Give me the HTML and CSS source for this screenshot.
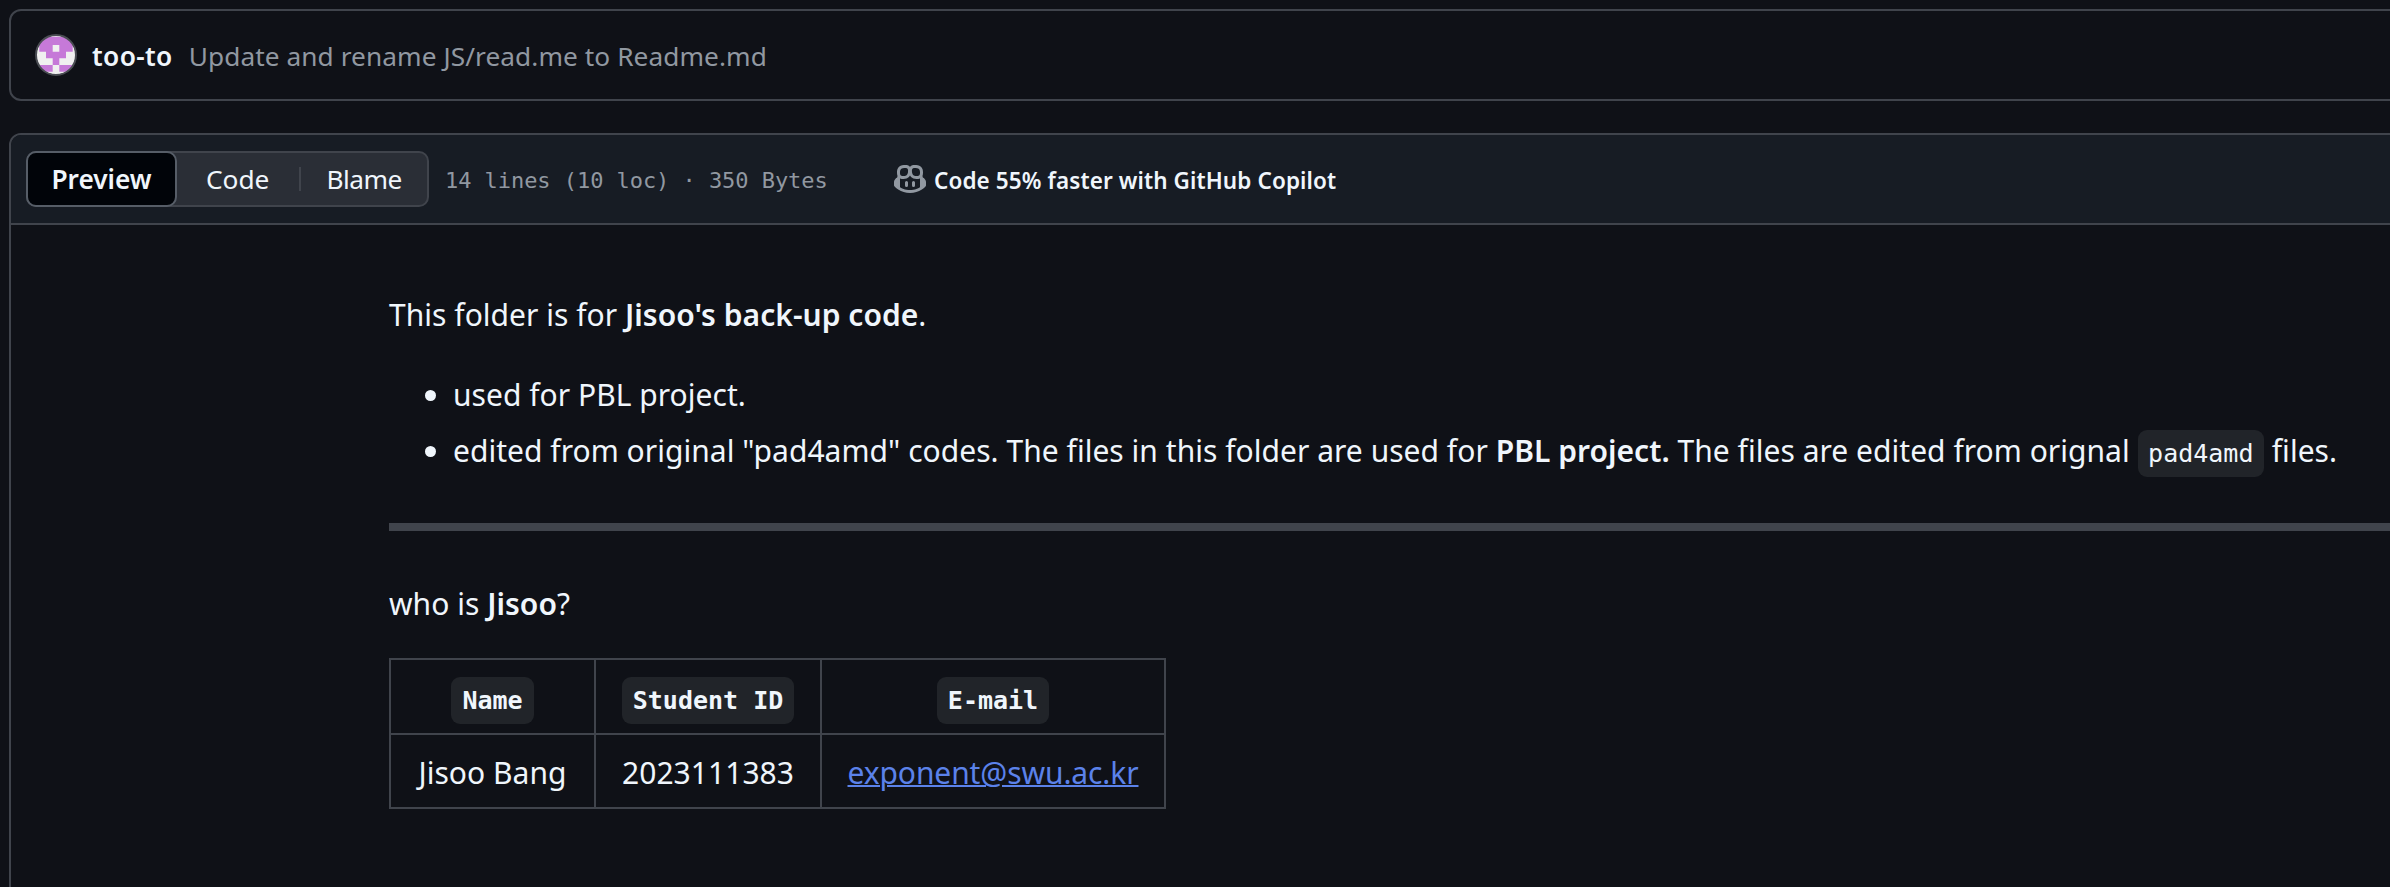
FILE: index.html
```html
<!DOCTYPE html>
<html lang="en">
<head>
<meta charset="utf-8">
<title>Readme.md</title>
<link rel="stylesheet" href="styles.css">
</head>
<body>
<div class="page">
  <section class="commit-box">
    <svg class="avatar" viewBox="0 0 42 42" width="42" height="42" aria-hidden="true">
      <defs><clipPath id="av"><circle cx="21" cy="21" r="19.5"/></clipPath></defs>
      <g clip-path="url(#av)">
        <rect width="42" height="42" fill="#f0f0f0"/>
        <path fill="#c679d8" d="M4.3 2.7H37.7V17.7H31V24.3H24.3V31H17.7V24.3H11V17.7H4.3Z"/>
        <path fill="#f0f0f0" d="M17.7 11H24.3V17.7H17.7Z"/>
        <path fill="#c679d8" d="M4.3 31H17.7V37.7H4.3ZM24.3 31H37.7V37.7H24.3Z"/>
      </g>
      <circle cx="21" cy="21" r="20" fill="none" stroke="#4a4d53" stroke-width="2"/>
    </svg>
    <span class="author">too-to</span>
    <span class="message">Update and rename JS/read.me to Readme.md</span>
  </section>

  <section class="file-box">
    <header class="file-head">
      <div class="segment">
        <span class="tab tab-active">Preview</span>
        <span class="tab tab-code">Code</span>
        <span class="tab-sep"></span>
        <span class="tab tab-blame">Blame</span>
      </div>
      <span class="file-info">14 lines (10 loc) · 350 Bytes</span>
      <span class="copilot">
        <svg class="copilot-icon" viewBox="0 0 16 16" width="32" height="32" aria-hidden="true"><path d="M7.998 15.035c-4.562 0-7.873-2.914-7.998-3.749V9.338c.085-.628.677-1.686 1.588-2.065.013-.07.024-.143.036-.218.029-.183.06-.384.126-.612-.201-.508-.254-1.084-.254-1.656 0-.87.128-1.769.693-2.484.579-.733 1.494-1.124 2.724-1.261 1.206-.134 2.262.034 2.944.765.05.053.096.108.139.165.044-.057.094-.112.143-.165.682-.731 1.738-.899 2.944-.765 1.23.137 2.145.528 2.724 1.261.566.715.693 1.614.693 2.484 0 .572-.053 1.148-.254 1.656.066.228.098.429.126.612.012.076.024.148.037.218.924.385 1.522 1.471 1.591 2.095v1.872c0 .766-3.351 3.795-8.002 3.795Zm0-1.485c2.28 0 4.584-1.11 5.002-1.433V7.862l-.023-.116c-.49.21-1.075.291-1.727.291-1.146 0-2.059-.327-2.71-.991A3.222 3.222 0 0 1 8 6.303a3.24 3.24 0 0 1-.544.743c-.65.664-1.563.991-2.71.991-.652 0-1.236-.081-1.727-.291l-.023.116v4.255c.419.323 2.722 1.433 5.002 1.433ZM6.762 2.83c-.193-.206-.637-.413-1.682-.297-1.019.113-1.479.404-1.713.7-.247.312-.369.789-.369 1.554 0 .793.129 1.171.308 1.371.162.181.519.379 1.442.379.853 0 1.339-.235 1.638-.54.315-.322.527-.827.617-1.553.117-.935-.037-1.395-.241-1.614Zm4.155-.297c-1.044-.116-1.488.091-1.681.297-.204.219-.359.679-.242 1.614.091.726.303 1.231.618 1.553.299.305.784.54 1.638.54.922 0 1.28-.198 1.442-.379.179-.2.308-.578.308-1.371 0-.765-.123-1.242-.37-1.554-.233-.296-.693-.587-1.713-.7Z"/><path d="M6.25 9.037a.75.75 0 0 1 .75.75v1.501a.75.75 0 0 1-1.5 0V9.787a.75.75 0 0 1 .75-.75Zm4.25.75v1.501a.75.75 0 0 1-1.5 0V9.787a.75.75 0 0 1 1.5 0Z"/></svg>
        <span class="copilot-text">Code 55% faster with GitHub Copilot</span>
      </span>
    </header>
    <article class="markdown">
      <p class="intro">This folder is for <strong>Jisoo's back-up code</strong>.</p>
      <ul class="notes">
        <li>used for PBL project.</li>
        <li>edited from original "pad4amd" codes. The files in this folder are used for <strong>PBL project.</strong> The files are edited from orignal <code class="inline-code">pad4amd</code> files.</li>
      </ul>
      <hr class="rule">
      <p class="who">who is <strong>Jisoo</strong>?</p>
      <table class="people">
        <thead>
          <tr>
            <th class="col-name"><code class="head-code">Name</code></th>
            <th class="col-id"><code class="head-code">Student ID</code></th>
            <th class="col-mail"><code class="head-code">E-mail</code></th>
          </tr>
        </thead>
        <tbody>
          <tr>
            <td>Jisoo Bang</td>
            <td>2023111383</td>
            <td><a class="mail" href="#">exponent@swu.ac.kr</a></td>
          </tr>
        </tbody>
      </table>
    </article>
  </section>
</div>
</body>
</html>
```
FILE: styles.css
```css
html, body {
  margin: 0;
  height: 100%;
  overflow: hidden;
  background: #0f1117;
}
body {
  font-family: "Noto Sans", "Open Sans", sans-serif;
  color: #f0f6fc;
}
.page {
  width: 2600px;
  padding: 9px 0 0 9px;
  box-sizing: border-box;
}
.commit-box {
  height: 92px;
  box-sizing: border-box;
  border: 2px solid #40444c;
  border-radius: 12px;
  display: flex;
  align-items: center;
  padding-left: 24px;
}
.avatar { flex: none; }
.author {
  margin-left: 15px;
  padding-top: 2px;
  font-size: 26.25px;
  font-weight: 600;
  letter-spacing: 0.4px;
}
.message {
  margin-left: 16px;
  padding-top: 2px;
  font-size: 26.25px;
  letter-spacing: 0.07px;
  color: #9198a1;
}
.file-box {
  margin-top: 32px;
  height: 800px;
  border: 2px solid #40444c;
  border-radius: 12px;
  box-sizing: border-box;
  overflow: hidden;
}
.file-head {
  height: 90px;
  background: #171c24;
  border-bottom: 2px solid #40444c;
  box-sizing: border-box;
  display: flex;
  align-items: center;
  padding-left: 15px;
}
.segment {
  display: flex;
  align-items: center;
  width: 403px;
  height: 56px;
  box-sizing: border-box;
  background: #2a2e36;
  border: 2px solid #40444c;
  border-radius: 10px;
  flex: none;
}
.tab { font-size: 26.25px; }
.tab-active {
  box-sizing: border-box;
  width: 151px;
  height: 56px;
  margin: -2px 0 -2px -2px;
  display: flex;
  align-items: center;
  justify-content: center;
  background: #010409;
  border: 2px solid #565d67;
  border-radius: 10px;
  font-weight: 600;
}
.tab-code { margin-left: 29px; }
.tab-sep {
  width: 2px;
  height: 24px;
  background: #40444c;
  margin-left: 30px;
}
.tab-blame {
  margin-left: 25px;
  letter-spacing: -0.5px;
}
.file-info {
  margin-left: 16px;
  padding-top: 2px;
  width: 449px;
  flex: none;
  font-family: "DejaVu Sans Mono", "Liberation Mono", monospace;
  font-size: 22px;
  letter-spacing: -0.05px;
  color: #9198a1;
}
.copilot {
  display: flex;
  align-items: center;
  gap: 8px;
}
.copilot-icon { fill: #9198a1; flex: none; }
.copilot-text {
  padding-top: 2px;
  font-size: 22.5px;
  font-weight: 600;
  letter-spacing: 0.1px;
}
.markdown {
  padding: 72px 0 0 378px;
  font-size: 30px;
  line-height: 36px;
  letter-spacing: 0.03px;
}
.markdown strong { font-weight: 600; }
.markdown p { margin: 0; }
.notes {
  margin: 44px 0 0;
  padding-left: 64px;
}
.notes li + li { margin-top: 20px; }
code {
  font-family: "DejaVu Sans Mono", "Liberation Mono", monospace;
  letter-spacing: 0;
  background: #212429;
  border-radius: 9px;
}
.inline-code {
  font-size: 25px;
  padding: 9px 10.5px;
}
.rule {
  height: 8px;
  margin: 51px 0 0;
  border: 0;
  background: #40444c;
}
.who { margin-top: 55px !important; }
.people {
  margin-top: 36px;
  border-collapse: collapse;
  table-layout: fixed;
  width: 775px;
}
.people th, .people td {
  box-sizing: border-box;
  border: 2px solid #40444c;
  padding: 0;
  text-align: center;
}
.people th {
  height: 75px;
  padding-top: 6px;
}
.people td {
  height: 74px;
  padding-top: 4px;
}
.col-name { width: 205px; }
.col-id { width: 226px; }
.col-mail { width: 344px; }
.head-code {
  font-size: 25px;
  font-weight: 700;
  padding: 9px 11px;
}
.mail {
  color: #5b82ea;
  letter-spacing: -0.1px;
  text-decoration: underline;
  text-decoration-thickness: 2px;
}
```
